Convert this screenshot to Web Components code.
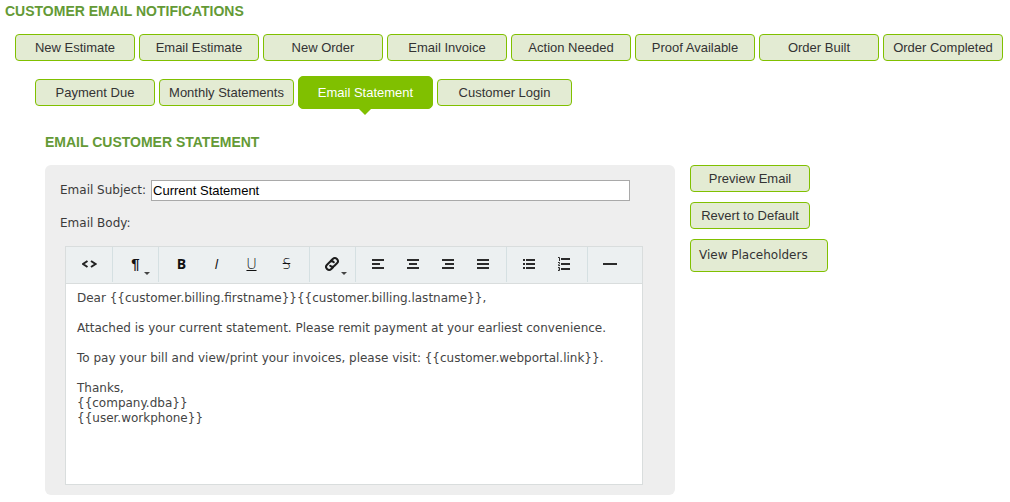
<!DOCTYPE html>
<html lang="en">
<head>
<meta charset="utf-8">
<title>Customer Email Notifications</title>
<style>
body { margin: 0; background: #fff; color: #3a3a3a; font: 13px/15px "Liberation Sans", Arial, sans-serif; }
</style>
</head>
<body>
<notifications-page>
  <section-heading level="1">CUSTOMER EMAIL NOTIFICATIONS</section-heading>
  <template-nav slot="nav">
    <action-button>New Estimate</action-button>
    <action-button>Email Estimate</action-button>
    <action-button>New Order</action-button>
    <action-button>Email Invoice</action-button>
    <action-button>Action Needed</action-button>
    <action-button>Proof Available</action-button>
    <action-button>Order Built</action-button>
    <action-button>Order Completed</action-button>
  </template-nav>
  <template-nav slot="nav" indented>
    <action-button>Payment Due</action-button>
    <action-button wide>Monthly Statements</action-button>
    <action-button wide active>Email Statement</action-button>
    <action-button wide>Customer Login</action-button>
  </template-nav>
  <section-heading slot="detail-heading" level="2">EMAIL CUSTOMER STATEMENT</section-heading>
  <email-form slot="detail" subject="Current Statement">
    <rich-editor>
      <div>Dear {{customer.billing.firstname}}{{customer.billing.lastname}},</div><br>
      <div>Attached is your current statement. Please remit payment at your earliest convenience.</div><br>
      <div>To pay your bill and view/print your invoices, please visit: {{customer.webportal.link}}.</div><br>
      <div>Thanks,</div>
      <div>{{company.dba}}</div>
      <div>{{user.workphone}}</div>
    </rich-editor>
  </email-form>
  <action-button slot="actions">Preview Email</action-button>
  <action-button slot="actions">Revert to Default</action-button>
  <action-button slot="actions" menu>View Placeholders</action-button>
</notifications-page>

<script>
const define = (name, render) => customElements.define(name, class extends HTMLElement {
  constructor() {
    super();
    this.attachShadow({ mode: 'open' });
  }
  connectedCallback() {
    if (this.shadowRoot.childNodes.length) return;
    this.shadowRoot.innerHTML = render(this);
  }
});

define('section-heading', el => {
  const tag = el.getAttribute('level') === '1' ? 'h1' : 'h2';
  return `
  <style>
    :host { display: block; }
    h1, h2 { margin: 0; font-size: 14px; line-height: 16px; font-weight: bold; color: #649a36; }
  </style>
  <${tag}><slot></slot></${tag}>`;
});

define('action-button', el => `
  <style>
    :host { display: block; flex: none; width: 120px; }
    :host([wide]) { width: 135px; }
    :host([menu]) { width: 138px; }
    button {
      display: block; box-sizing: border-box; width: 100%; height: 27px; padding: 0;
      border: 1px solid #80c000; border-radius: 4px; background: #e3ebd3; color: #333;
      font: 13px/25px "Liberation Sans", Arial, sans-serif; text-align: center; white-space: nowrap; cursor: pointer;
    }
    :host([active]) button { position: relative; height: 33px; border-radius: 5px; background: #80c000; color: #fff; }
    :host([active]) button::after {
      content: ""; position: absolute; top: 100%; left: 50%; margin-left: -8px;
      border: 7px solid transparent; border-top-color: #80c000; border-bottom: 0;
    }
    :host([menu]) button {
      height: 33px; padding-left: 8px; text-align: left;
      font: 12px/31px "DejaVu Sans", Tahoma, sans-serif;
    }
  </style>
  <button type="button"${el.hasAttribute('active') ? ' aria-current="page"' : ''}><slot></slot></button>`);

define('template-nav', () => `
  <style>
    :host { display: block; padding-left: 10px; }
    :host([indented]) { padding-left: 30px; }
    nav { display: flex; align-items: center; gap: 4px; }
  </style>
  <nav><slot></slot></nav>`);

define('email-form', el => `
  <style>
    :host {
      display: block; box-sizing: border-box; padding: 15px 32px 10px 15px; background: #eee; border-radius: 6px;
      font: 12px/15px "DejaVu Sans", Tahoma, sans-serif;
    }
    .subject { display: flex; align-items: center; gap: 5px; margin-right: 13px; }
    input {
      flex: 1; min-width: 0; box-sizing: border-box; height: 21px; padding: 1px; margin: 0;
      border: 1px solid #a9a9a9; border-radius: 0; background: #fff; color: #000;
      font: 13px/17px "Liberation Sans", Arial, sans-serif;
    }
    .body-label { margin: 15px 0; }
    .editor { padding-left: 5px; }
  </style>
  <form>
    <div class="subject">
      <label for="subject">Email Subject:</label>
      <input id="subject" type="text" value="${el.getAttribute('subject')}">
    </div>
    <div class="body-label">Email Body:</div>
    <div class="editor"><slot></slot></div>
  </form>`);

const svg = (body, width = 13, height = 14) => `<svg width="${width}" height="${height}" viewBox="0 0 ${width} ${height}" aria-hidden="true">${body}</svg>`;
const bars = (rows, width) => svg(rows.map(([x, y, w]) => `<path fill="#2b2b2b" d="M${x} ${y}h${w}v2h-${w}z"/>`).join(''), width);
const icons = {
  code: svg('<path fill="none" stroke="#222" stroke-width="2" d="M5.500 4L1 7L5.500 10M9 4l4.500 3L9 10"/>', 15),
  left: bars([[0, 2, 12], [0, 6, 8], [0, 10, 12]]),
  center: bars([[0, 2, 12], [2, 6, 8], [0, 10, 12]]),
  right: bars([[0, 2, 12], [3, 6, 9], [0, 10, 12]]),
  justify: bars([[0, 2, 12], [0, 6, 12], [0, 10, 12]]),
  bullets: bars([[0, 2, 2], [3, 2, 9], [0, 6, 2], [3, 6, 9], [0, 10, 2], [3, 10, 9]]),
  numbers: svg('<path fill="#2b2b2b" d="M3 1h9v2H3zM3 6h9v2H3zM3 11h9v2H3z"/><path fill="none" stroke="#2b2b2b" d="M0 .5h1.500V4M0 5.500h1.500v1L.500 8v.5H2M0 10.500h1.500v3H0M.500 12h1"/>'),
  rule: bars([[0, 6, 14]], 15),
  link: svg('<g fill="none" stroke="#1c1c1c" stroke-width="2" stroke-linecap="round" transform="translate(-1 0) rotate(-45 8 8)"><path d="M6.500 11H4a3 3 0 0 1 0-6H7.500a3 3 0 0 1 3 3"/><path d="M9.500 5H12a3 3 0 0 1 0 6H8.500a3 3 0 0 1-3-3"/></g>', 15, 16)
};

define('tool-button', el => {
  const icon = el.getAttribute('icon');
  return `
  <style>
    :host { display: block; width: 35px; height: 34px; }
    button {
      position: relative; display: flex; align-items: center; justify-content: center; width: 100%; height: 100%;
      padding: 0; border: 0; background: none; color: #111; font: 14px/16px "Open Sans", sans-serif; cursor: pointer;
    }
    svg { display: block; }
    .bold { font-weight: bold; }
    .paragraph { font: bold 15px/16px "Liberation Sans", Arial, sans-serif; }
    .italic { font-style: italic; }
    .underline { text-decoration: underline; font-weight: 300; }
    .strike { text-decoration: line-through; font-weight: 300; }
    :host([menu]) button::after {
      content: ""; position: absolute; right: 3px; bottom: 6px;
      border: 3px solid transparent; border-top-color: #444; border-bottom: 0;
    }
  </style>
  <button type="button" aria-label="${el.getAttribute('label')}">${icon ? icons[icon] : `<span class="${el.getAttribute('look')}"><slot></slot></span>`}</button>`;
});

define('rich-editor', () => `
  <style>
    :host { display: block; border: 1px solid #d9dddd; background: #fff; }
    .toolbar { display: flex; flex-wrap: wrap; padding-left: 1px; background: #ecf0f1; border-bottom: 1px solid #d9dddd; }
    .group { display: flex; height: 35px; margin-bottom: 1px; padding: 0 5px; border-right: 1px solid #d5e0e2; }
    .group:last-child { border-right: 0; }
    .text { box-sizing: border-box; min-height: 200px; padding: 7px 11px; color: #444; outline: none; }
  </style>
  <div class="toolbar" role="toolbar" aria-label="Formatting">
    <div class="group"><tool-button icon="code" label="Source"></tool-button></div>
    <div class="group"><tool-button look="paragraph" label="Paragraph format" menu>¶</tool-button></div>
    <div class="group">
      <tool-button look="bold" label="Bold">B</tool-button>
      <tool-button look="italic" label="Italic">I</tool-button>
      <tool-button look="underline" label="Underline">U</tool-button>
      <tool-button look="strike" label="Strikethrough">S</tool-button>
    </div>
    <div class="group"><tool-button icon="link" label="Link" menu></tool-button></div>
    <div class="group">
      <tool-button icon="left" label="Align left"></tool-button>
      <tool-button icon="center" label="Align center"></tool-button>
      <tool-button icon="right" label="Align right"></tool-button>
      <tool-button icon="justify" label="Justify"></tool-button>
    </div>
    <div class="group">
      <tool-button icon="bullets" label="Bulleted list"></tool-button>
      <tool-button icon="numbers" label="Numbered list"></tool-button>
    </div>
    <div class="group"><tool-button icon="rule" label="Horizontal rule"></tool-button></div>
  </div>
  <div class="text" role="textbox" aria-multiline="true" aria-label="Email Body" contenteditable="true" spellcheck="false"><slot></slot></div>`);

define('notifications-page', () => `
  <style>
    :host { display: block; padding: 3px 5px 7px; }
    .navs { display: flex; flex-direction: column; gap: 15px; margin-top: 15px; }
    .detail { padding-left: 40px; margin-top: 25px; }
    .columns { display: flex; align-items: flex-start; gap: 15px; margin-top: 15px; }
    .main { flex: 0 1 630px; min-width: 0; }
    .actions { display: flex; flex-direction: column; gap: 10px; }
  </style>
  <main>
    <slot></slot>
    <div class="navs"><slot name="nav"></slot></div>
    <div class="detail">
      <slot name="detail-heading"></slot>
      <div class="columns">
        <div class="main"><slot name="detail"></slot></div>
        <div class="actions"><slot name="actions"></slot></div>
      </div>
    </div>
  </main>`);
</script>
</body>
</html>
